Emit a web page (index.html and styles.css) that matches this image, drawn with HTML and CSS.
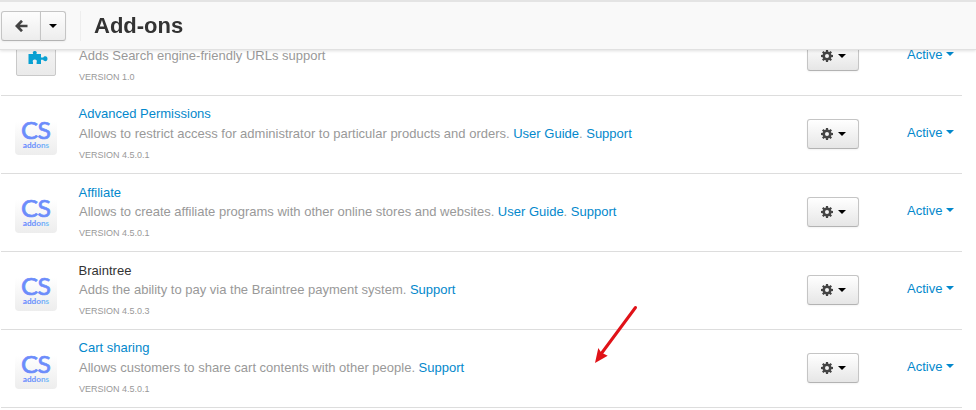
FILE: index.html
```html
<!DOCTYPE html>
<html lang="en">
<head>
<meta charset="utf-8">
<title>Add-ons</title>
<link rel="stylesheet" href="styles.css">
</head>
<body>
<svg class="defs" width="0" height="0" aria-hidden="true">
  <defs>
    <linearGradient id="ink" x1="0" y1="0" x2="1" y2="0"><stop offset="0" stop-color="#5f83ff"/><stop offset=".55" stop-color="#6a94fb"/><stop offset="1" stop-color="#7dc8f5"/></linearGradient>
    <symbol id="gear" viewBox="0 0 12 12">
      <g fill="#444">
        <rect x="4.9" y="0" width="2.2" height="12"/>
        <rect x="4.9" y="0" width="2.2" height="12" transform="rotate(45 6 6)"/>
        <rect x="4.9" y="0" width="2.2" height="12" transform="rotate(90 6 6)"/>
        <rect x="4.9" y="0" width="2.2" height="12" transform="rotate(135 6 6)"/>
        <circle cx="6" cy="6" r="4.6"/>
      </g>
      <circle cx="6" cy="6" r="2" fill="#f3f3f3"/>
    </symbol>
    <symbol id="cs" viewBox="0 0 42 42">
      <text x="5.9" y="25.8" class="cs-big" textLength="17" lengthAdjust="spacingAndGlyphs">C</text>
      <text x="22.6" y="25.8" class="cs-big" textLength="13.4" lengthAdjust="spacingAndGlyphs">S</text>
      <text x="7.8" y="34.6" class="cs-small" fill="url(#ink)" textLength="26.4" lengthAdjust="spacingAndGlyphs">addons</text>
    </symbol>
  </defs>
</svg>
<header class="bar">
  <div class="group">
    <button class="btn back" aria-label="Back"><svg width="13" height="12" viewBox="0 0 13 12"><path d="M7 .8 1.8 6 7 11.2M2.2 6H12.5" fill="none" stroke="#444" stroke-width="2.7"/></svg></button>
    <button class="btn more" aria-label="More"><span class="caret"></span></button>
  </div>
  <h1>Add-ons</h1>
</header>
<main class="list">
  <section class="row">
    <div class="icon puzzle"><svg width="20" height="14" viewBox="0 0 20 14"><path d="M.5 3H5.2C4.2 1.4 5 0 6.8 0S9.4 1.4 8.4 3H13V6.6H15.2C15.6 5.6 16.4 5.2 17.4 5.2 18.7 5.2 19.5 6.2 19.5 7.7S18.7 10.2 17.4 10.2C16.4 10.2 15.6 9.8 15.2 8.8H13V13H8.6V11.4C9.4 9.6 8.4 8.4 6.8 8.4S4.2 9.6 5 11.4V13H.5Z" fill="#08a0d2"/></svg></div>
    <div class="info"><div class="name"></div><div class="desc">Adds Search engine-friendly URLs support</div><div class="ver">VERSION 1.0</div></div>
    <button class="btn tool" aria-label="Options"><svg width="12" height="12"><use href="#gear"/></svg><span class="caret"></span></button>
    <a class="status">Active<span class="caret"></span></a>
  </section>
  <section class="row">
    <svg class="icon cs"><use href="#cs"/></svg>
    <div class="info"><div class="name"><a>Advanced Permissions</a></div><div class="desc">Allows to restrict access for administrator to particular products and orders. <a>User Guide</a>. <a>Support</a></div><div class="ver">VERSION 4.5.0.1</div></div>
    <button class="btn tool" aria-label="Options"><svg width="12" height="12"><use href="#gear"/></svg><span class="caret"></span></button>
    <a class="status">Active<span class="caret"></span></a>
  </section>
  <section class="row">
    <svg class="icon cs"><use href="#cs"/></svg>
    <div class="info"><div class="name low"><a>Affiliate</a></div><div class="desc">Allows to create affiliate programs with other online stores and websites. <a>User Guide</a>. <a>Support</a></div><div class="ver">VERSION 4.5.0.1</div></div>
    <button class="btn tool" aria-label="Options"><svg width="12" height="12"><use href="#gear"/></svg><span class="caret"></span></button>
    <a class="status">Active<span class="caret"></span></a>
  </section>
  <section class="row">
    <svg class="icon cs"><use href="#cs"/></svg>
    <div class="info"><div class="name low">Braintree</div><div class="desc">Adds the ability to pay via the Braintree payment system. <a>Support</a></div><div class="ver">VERSION 4.5.0.3</div></div>
    <button class="btn tool" aria-label="Options"><svg width="12" height="12"><use href="#gear"/></svg><span class="caret"></span></button>
    <a class="status">Active<span class="caret"></span></a>
  </section>
  <section class="row">
    <svg class="icon cs"><use href="#cs"/></svg>
    <div class="info"><div class="name"><a>Cart sharing</a></div><div class="desc">Allows customers to share cart contents with other people. <a>Support</a></div><div class="ver">VERSION 4.5.0.1</div></div>
    <button class="btn tool" aria-label="Options"><svg width="12" height="12"><use href="#gear"/></svg><span class="caret"></span></button>
    <a class="status">Active<span class="caret"></span></a>
  </section>
</main>
<svg class="pointer" width="50" height="66" viewBox="0 0 50 66"><path d="M45.5 6.5 11 53" stroke="#e01218" stroke-width="3" stroke-linecap="round"/><path d="M5 62 8.3 47 11.2 51.5 17.7 54.7Z" fill="#e01218"/></svg>
</body>
</html>
```
FILE: styles.css
```css
* { box-sizing: border-box; }
body {
  margin: 0;
  height: 410px;
  overflow: hidden;
  background: #fff;
  color: #333;
  font: 13px/20px "Liberation Sans", Arial, sans-serif;
}
.defs { position: absolute; }
a { color: #0388cc; }
.bar {
  position: fixed;
  top: 0;
  left: 0;
  z-index: 2;
  width: 100%;
  height: 50px;
  display: flex;
  align-items: center;
  padding-left: 1px;
  background: #f9f9f9;
  border-top: 2px solid #e4e4e4;
  border-bottom: 1px solid #e1e1e1;
  box-shadow: 0 1px 3px rgba(0, 0, 0, .13);
}
.group {
  display: flex;
  width: 65px;
  height: 30px;
  margin-top: 1px;
}
.btn {
  display: flex;
  align-items: center;
  justify-content: center;
  padding: 0;
  height: 30px;
  border: 1px solid #c5c5c5;
  border-bottom-color: #b3b3b3;
  border-radius: 3px;
  background: linear-gradient(#fff, #e6e6e6);
  box-shadow: 0 1px 2px rgba(0, 0, 0, .05);
}
.group .btn { background: linear-gradient(#fdfdfd, #ededed); }
.back { width: 40px; border-radius: 3px 0 0 3px; }
.more { width: 26px; margin-left: -1px; border-radius: 0 3px 3px 0; }
.caret {
  width: 0;
  height: 0;
  border: 4px solid transparent;
  border-top-color: #000;
  border-bottom: 0;
}
h1 {
  margin: 0 0 0 14px;
  padding-left: 13px;
  border-left: 1px solid #eee;
  font-size: 22px;
  line-height: 30px;
}
.list { width: 961px; margin-left: 1px; padding-top: 18px; }
.row {
  display: flex;
  height: 78px;
  border-bottom: 1px solid #ddd;
}
.icon { width: 42px; height: 42px; margin: 17px 0 0 14px; flex: none; }
.puzzle {
  display: flex;
  align-items: center;
  justify-content: center;
  width: 40px;
  height: 40px;
  margin: 18px 1px 0 15px;
  padding: 4px 0 0 4px;
  border: 1px solid #c9c9c9;
  border-radius: 2px;
  background: linear-gradient(#f8f8f8, #eaeaea);
}
.cs {
  border-radius: 4px;
  background: linear-gradient(#fff 20%, #ededed);
}
.cs-big { font: 400 23.5px Lato, sans-serif; fill: #6c8cfb; stroke: #6c8cfb; stroke-width: .7px; }
.cs-small { font: 700 8px Lato, sans-serif; }
.info { width: 728px; margin-left: 22px; padding-top: 8px; flex: none; }
.name { height: 20px; margin-left: -.4px; }
.low { height: 20px; padding-top: 1px; }
.desc { color: #999; }
.ver { color: #999; font-size: 9px; line-height: 20px; padding-top: 1px; }
.tool { width: 52px; margin-top: 23px; gap: 5px; flex: none; }
.status {
  display: flex;
  align-items: center;
  gap: 4px;
  height: 20px;
  margin: 27px 0 0 48px;
}
.status .caret { border-top-color: #0388cc; margin-top: -3px; }
.pointer { position: absolute; left: 590px; top: 301px; z-index: 1; }
```
